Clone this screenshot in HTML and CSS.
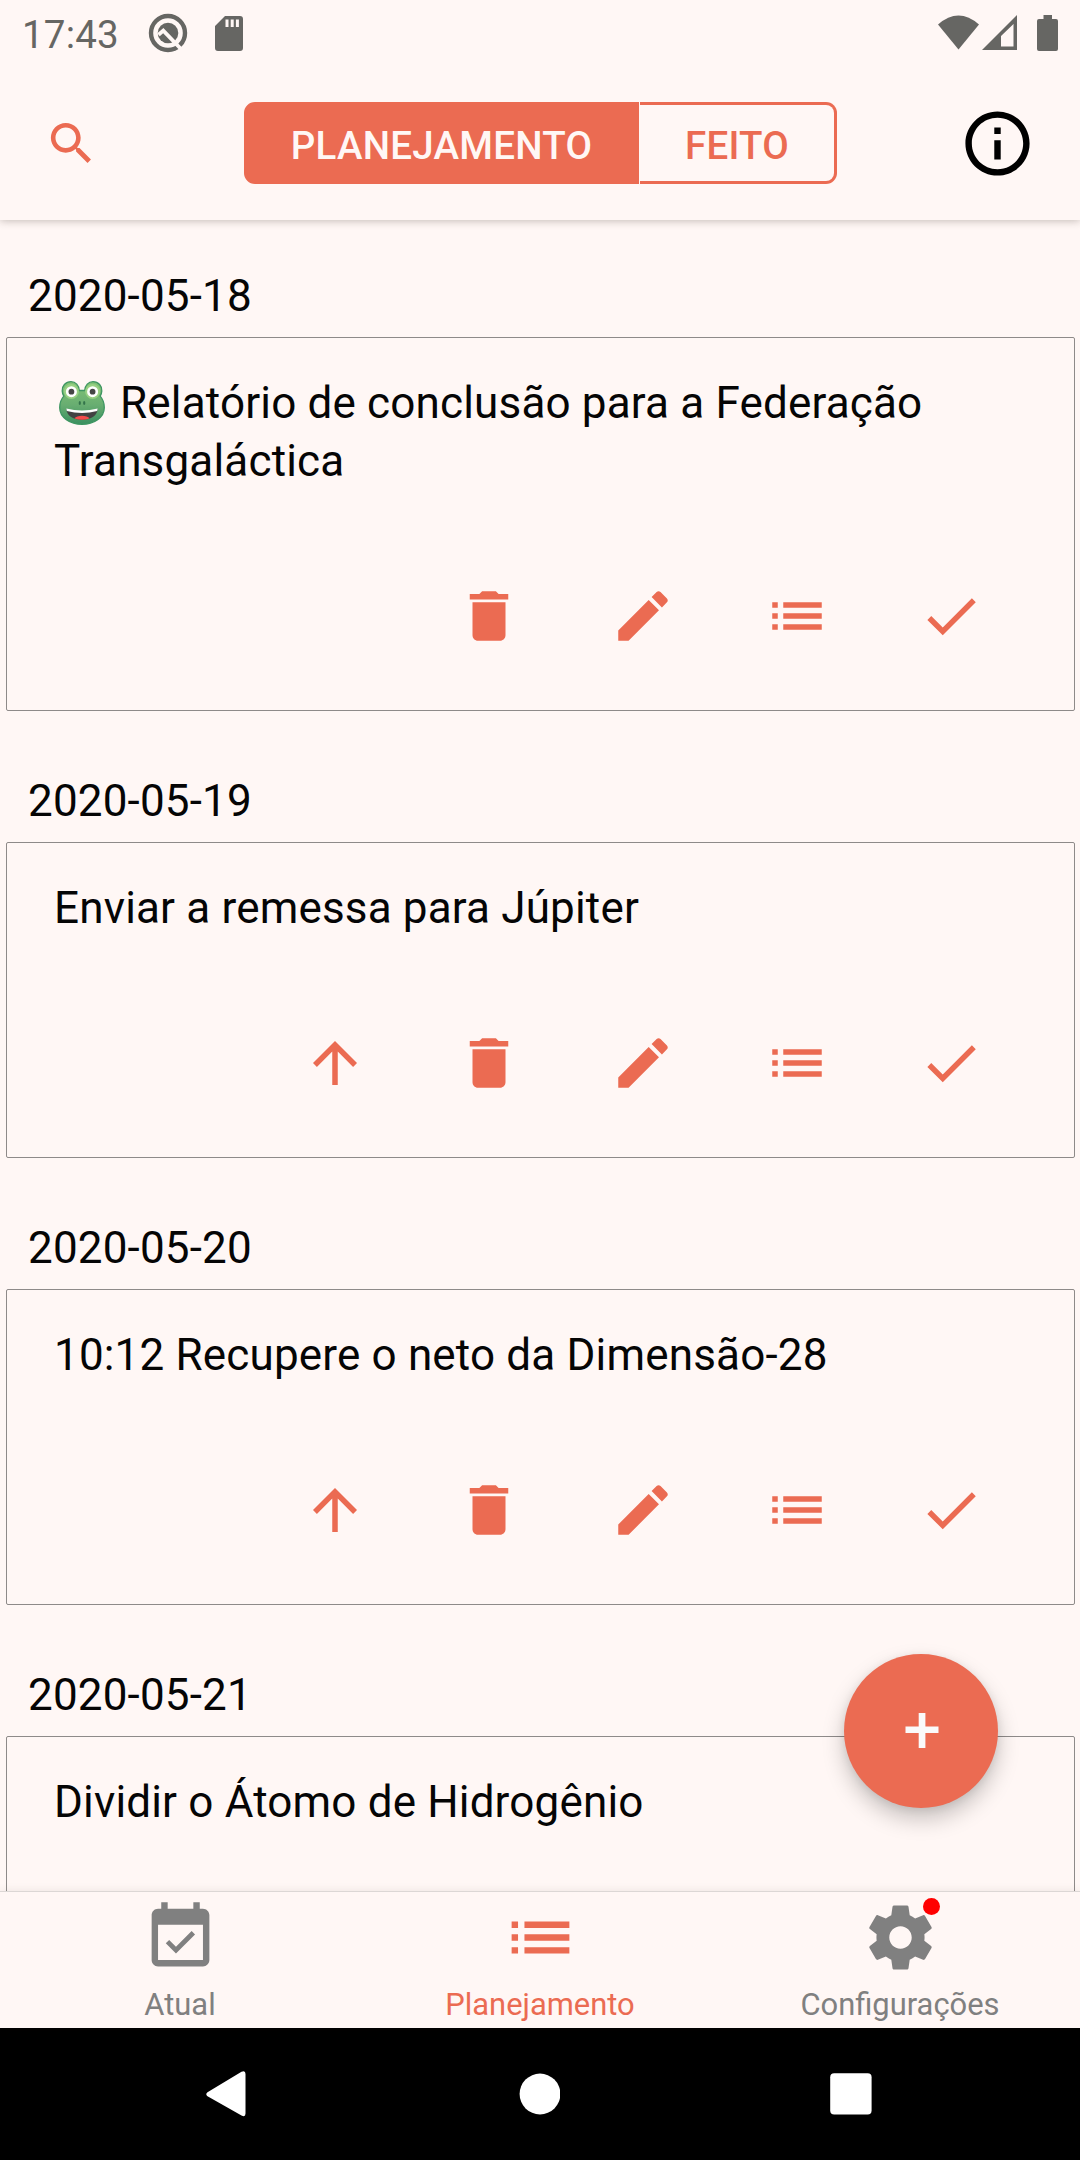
FILE: index.html
```html
<!DOCTYPE html>
<html lang="pt">
<head>
<meta charset="utf-8">
<title>Planejamento</title>
<link rel="stylesheet" href="styles.css">
</head>
<body>
<svg class="defs" aria-hidden="true">
  <symbol id="up" viewBox="0 0 24 24"><path d="M4 12l1.41 1.41L11 7.83V20h2V7.83l5.58 5.59L20 12l-8-8-8 8z"/></symbol>
  <symbol id="trash" viewBox="0 0 24 24"><path d="M6 19c0 1.1.9 2 2 2h8c1.1 0 2-.9 2-2V7H6v12zM19 4h-3.5l-1-1h-5l-1 1H5v2h14V4z"/></symbol>
  <symbol id="edit" viewBox="0 0 24 24"><path d="M3 17.25V21h3.75L17.81 9.94l-3.75-3.75L3 17.25zM20.71 7.04c.39-.39.39-1.02 0-1.41l-2.34-2.34c-.39-.39-1.02-.39-1.41 0l-1.83 1.83 3.75 3.75 1.83-1.83z"/></symbol>
  <symbol id="list" viewBox="0 0 24 24"><path d="M3 13h2v-2H3v2zm0 4h2v-2H3v2zm0-8h2V7H3v2zm4 4h14v-2H7v2zm0 4h14v-2H7v2zM7 7v2h14V7H7z"/></symbol>
  <symbol id="check" viewBox="0 0 24 24"><path d="M9 16.17L4.83 12l-1.42 1.41L9 19 21 7l-1.41-1.41z"/></symbol>
</svg>
<div class="screen">
  <div class="status">
    <span class="clock">17:43</span>
    <svg class="s-app" viewBox="0 0 40 40"><circle cx="20" cy="20" r="17" fill="none" stroke="currentColor" stroke-width="4.4"/><circle cx="20" cy="20" r="10.3"/><path d="M10.500 21.800L15.300 17.600L33 36" fill="none" stroke="#fff7f5" stroke-width="3.800"/></svg>
    <svg class="s-sd" viewBox="0 0 28 35"><path fill-rule="evenodd" d="M10 0h15a3 3 0 0 1 3 3v29a3 3 0 0 1-3 3H3a3 3 0 0 1-3-3V10zM10.500 3.500v7.500h3V3.500zm5.200 0v7.500h3V3.500zm5.200 0v7.500h3V3.500z"/></svg>
    <span class="grow"></span>
    <svg class="s-wifi" viewBox="0 0 41 35"><path d="M0 9.500Q20.500-8.500 41 9.500L20.500 34.500z"/></svg>
    <svg class="s-cell" viewBox="0 0 35 35"><path fill-rule="evenodd" d="M35 0v35H0zM31.500 9L19 21v10.500h12.500z"/></svg>
    <svg class="s-bat" viewBox="0 0 21 36"><path d="M6.500 0h8.500v4h4a2 2 0 0 1 2 2v28a2 2 0 0 1-2 2H2a2 2 0 0 1-2-2V6a2 2 0 0 1 2-2h4.500z"/></svg>
  </div>
  <header class="header">
    <svg class="search" viewBox="0 0 24 24"><path d="M15.500 14h-.79l-.28-.27C15.410 12.590 16 11.110 16 9.500 16 5.910 13.090 3 9.500 3S3 5.910 3 9.500 5.910 16 9.500 16c1.610 0 3.090-.59 4.230-1.570l.27.28v.79l5 4.990L20.490 19l-4.990-5zm-6 0C7.010 14 5 11.990 5 9.500S7.010 5 9.500 5 14 7.010 14 9.500 11.990 14 9.500 14z"/></svg>
    <div class="toggle"><div class="seg on">PLANEJAMENTO</div><div class="seg off">FEITO</div></div>
    <svg class="info" viewBox="0 0 24 24"><path d="M11 17h2v-6h-2v6zm1-15C6.480 2 2 6.480 2 12s4.480 10 10 10 10-4.480 10-10S17.520 2 12 2zm0 18c-4.410 0-8-3.590-8-8s3.590-8 8-8 8 3.590 8 8-3.590 8-8 8zM11 9h2V7h-2v2z"/></svg>
  </header>
  <main class="content">
    <section class="day">
      <h2 class="date">2020-05-18</h2>
      <article class="card">
        <p class="title"><svg class="frog" viewBox="0 0 46 44"><defs><linearGradient id="g" x1="0" y1="0" x2="0" y2="1"><stop offset="0" stop-color="#82c476"/><stop offset=".55" stop-color="#68ad71"/><stop offset="1" stop-color="#3b9060"/></linearGradient></defs><path d="M12 .7C6.500.7 2.800 5 3.200 10c.1 2.200.9 4 1.600 5.200C2 18.500.7 22 .7 26.500.7 36.500 11 43.300 23 43.300S45.300 36.500 45.300 26.500c0-4.500-1.300-8-4.100-11.300.7-1.200 1.500-3 1.600-5.200C43.200 5 39.500.7 34 .7c-4.600 0-8 3.600-8.300 8.800h-5.400C20 4.300 16.600.7 12 .7z" fill="url(#g)" stroke="#3f9662" stroke-width="1.300"/><circle cx="12.400" cy="10.500" r="7.500" fill="#98d083"/><circle cx="33.600" cy="10.500" r="7.500" fill="#98d083"/><circle cx="12.400" cy="10.700" r="5.500" fill="#fff"/><circle cx="33.600" cy="10.700" r="5.500" fill="#fff"/><circle cx="12.400" cy="10.700" r="2.900" fill="#454545"/><circle cx="33.600" cy="10.700" r="2.900" fill="#454545"/><ellipse cx="20.800" cy="22" rx="1.100" ry="1.900" fill="#34744b"/><ellipse cx="25.200" cy="22" rx="1.100" ry="1.900" fill="#34744b"/><path d="M7.300 27.800Q23 34 38.700 27.800C38.300 34.500 32.500 38.800 23 38.800S7.700 34.500 7.300 27.800z" fill="#424242"/><path d="M7.300 27.500Q23 31.500 38.700 27.500L38.200 30Q23 34 7.800 30z" fill="#fff"/><path d="M15.500 37.500C17.500 33.800 28.500 33.800 30.500 37.500Q23 40 15.500 37.500z" fill="#f44c4c"/></svg> Relatório de conclusão para a Federação Transgaláctica</p>
        <div class="actions"><svg><use href="#trash"/></svg><svg><use href="#edit"/></svg><svg><use href="#list"/></svg><svg><use href="#check"/></svg></div>
      </article>
    </section>
    <section class="day">
      <h2 class="date">2020-05-19</h2>
      <article class="card">
        <p class="title">Enviar a remessa para Júpiter</p>
        <div class="actions"><svg><use href="#up"/></svg><svg><use href="#trash"/></svg><svg><use href="#edit"/></svg><svg><use href="#list"/></svg><svg><use href="#check"/></svg></div>
      </article>
    </section>
    <section class="day">
      <h2 class="date">2020-05-20</h2>
      <article class="card">
        <p class="title">10:12 Recupere o neto da Dimensão-28</p>
        <div class="actions"><svg><use href="#up"/></svg><svg><use href="#trash"/></svg><svg><use href="#edit"/></svg><svg><use href="#list"/></svg><svg><use href="#check"/></svg></div>
      </article>
    </section>
    <section class="day">
      <h2 class="date">2020-05-21</h2>
      <article class="card">
        <p class="title">Dividir o Átomo de Hidrogênio</p>
      </article>
    </section>
    <div class="fab"><svg viewBox="0 0 34 36"><path d="M13.700 0h6.700v13.400H33.500v6.700H20.400V35h-6.700V20.100H.5v-6.700h13.200z"/></svg></div>
  </main>
  <nav class="tabs">
    <div class="tab"><svg viewBox="0 0 24 24"><path d="M16.530 11.060L15.470 10l-4.880 4.880-2.120-2.120-1.060 1.060L10.590 17l5.940-5.940zM19 3h-1V1h-2v2H8V1H6v2H5c-1.110 0-1.990.9-1.990 2L3 19c0 1.100.89 2 2 2h14c1.100 0 2-.9 2-2V5c0-1.100-.9-2-2-2zm0 16H5V8h14v11z"/></svg><span>Atual</span></div>
    <div class="tab active"><svg><use href="#list"/></svg><span>Planejamento</span></div>
    <div class="tab"><svg viewBox="0 0 24 24"><path d="M19.430 12.980c.04-.32.070-.64.070-.98s-.03-.66-.07-.98l2.110-1.650c.19-.15.24-.42.12-.64l-2-3.460c-.12-.22-.39-.3-.61-.22l-2.490 1c-.52-.4-1.080-.73-1.690-.98l-.38-2.650C14.460 2.180 14.250 2 14 2h-4c-.25 0-.46.18-.49.42l-.38 2.650c-.61.25-1.170.59-1.690.98l-2.490-1c-.23-.09-.49 0-.61.22l-2 3.460c-.13.22-.07.49.12.64l2.110 1.650c-.04.32-.07.65-.07.98s.03.66.07.98l-2.110 1.650c-.19.15-.24.42-.12.64l2 3.460c.12.22.39.3.61.22l2.490-1c.52.4 1.080.73 1.690.98l.38 2.650c.03.24.24.42.49.42h4c.25 0 .46-.18.49-.42l.38-2.650c.61-.25 1.170-.59 1.690-.98l2.490 1c.23.09.49 0 .61-.22l2-3.460c.12-.22.07-.49-.12-.64l-2.110-1.650zM12 15.500c-1.930 0-3.500-1.570-3.500-3.500s1.570-3.500 3.500-3.500 3.500 1.570 3.500 3.500-1.570 3.500-3.500 3.500z"/></svg><span>Configurações</span><i class="dot"></i></div>
  </nav>
  <div class="navbar">
    <svg viewBox="0 0 42 46"><path d="M1.500 21.200L35.500.8Q39.500-1 39.500 3v39.500q0 4-4 2L1.500 25.300q-2.500-2 0-4.100z"/></svg>
    <svg viewBox="0 0 42 46"><circle cx="22" cy="23" r="20.400"/></svg>
    <svg viewBox="0 0 42 46"><rect x=".2" y="2.200" width="41.400" height="41.400" rx="4"/></svg>
  </div>
</div>
</body>
</html>
```

FILE: styles.css
```css
* { box-sizing: border-box; }
body { margin: 0; font-family: Roboto, "Liberation Sans", sans-serif; }
svg { display: block; fill: currentColor; flex: none; }
.defs { position: absolute; width: 0; height: 0; }
.screen { display: flex; flex-direction: column; width: 1080px; height: 2160px; overflow: hidden; background: #fff7f5; color: #050505; }

.status { display: flex; align-items: flex-start; height: 66px; padding: 0 22px; color: #666663; }
.clock { width: 126px; font-size: 38.5px; line-height: 44px; padding-top: 13px; letter-spacing: .2px; }
.s-app { width: 40px; height: 40px; margin-top: 13px; }
.s-sd { width: 28px; height: 35px; margin: 16px 0 0 27px; }
.grow { flex: 1; }
.s-wifi { width: 41px; height: 35px; margin-top: 15px; }
.s-cell { width: 35px; height: 35px; margin: 15px 20px 0 3px; }
.s-bat { width: 21px; height: 36px; margin-top: 15px; }

.header { position: relative; z-index: 1; display: flex; align-items: center; height: 154px; padding: 0 44px; background: #fff7f5; box-shadow: 0 1px 8px rgba(60, 50, 40, .3); clip-path: inset(0 0 -14px 0); }
.search { width: 55px; height: 55px; color: #eb6b52; }
.info { width: 77px; height: 77px; margin-left: auto; color: #000; }
.toggle { display: flex; gap: 1px; width: 593px; height: 82px; margin-left: 145px; }
.seg { display: flex; align-items: center; justify-content: center; border: 3px solid #eb6b52; font-size: 38.5px; font-weight: 500; letter-spacing: .25px; padding-top: 4px; }
.on { width: 395px; background: #eb6b52; color: #fff7f5; border-radius: 11px 0 0 11px; }
.off { width: 197px; color: #eb6b52; border-left: 0; border-radius: 0 11px 11px 0; }

.content { position: relative; flex: 1; min-height: 0; overflow: hidden; }
.day { margin: 0 5px 14px 6px; }
.date { margin: 0; height: 117px; padding: 50px 0 0 22px; font-size: 44px; font-weight: 400; line-height: 52px; letter-spacing: .17px; }
.card { min-height: 316px; padding: 36px 90px 61px 47px; border: 1px solid #8e8a89; border-radius: 2px; }
.title { margin: 0 -60px 93px 0; font-size: 44px; line-height: 58px; letter-spacing: .17px; }
.frog { display: inline-block; width: 46px; height: 44px; margin: 0 4px 0 5px; vertical-align: -7px; }
.actions { display: flex; justify-content: flex-end; gap: 88px; color: #eb6b52; }
.actions svg { width: 66px; height: 66px; }

.fab { position: absolute; right: 82px; bottom: 83px; display: flex; align-items: center; justify-content: center; width: 154px; height: 154px; padding-left: 1px; border-radius: 50%; background: #eb6b52; color: #fafafa; box-shadow: 0 11px 22px rgba(0, 0, 0, .22), 0 2px 8px rgba(0, 0, 0, .08); }
.fab svg { width: 34px; height: 36px; }

.tabs { position: relative; display: flex; height: 137px; border-top: 1px solid #dcd7d5; background: #fff7f5; box-shadow: 0 -1px 8px rgba(60, 50, 40, .08); }
.tab { position: relative; flex: 1; display: flex; flex-direction: column; align-items: center; padding-top: 7px; color: #808080; font-size: 30.9px; line-height: 36px; }
.tab svg { width: 77px; height: 77px; }
.tab span { margin-top: 11px; }
.active { color: #eb6b52; }
.dot { position: absolute; top: 6px; left: 203px; width: 17px; height: 17px; border-radius: 50%; background: #f00; }

.navbar { display: flex; justify-content: space-between; align-items: center; height: 132px; padding: 0 208px 0 206px; background: #000; color: #fff; }
.navbar svg { width: 42px; height: 46px; }
```
